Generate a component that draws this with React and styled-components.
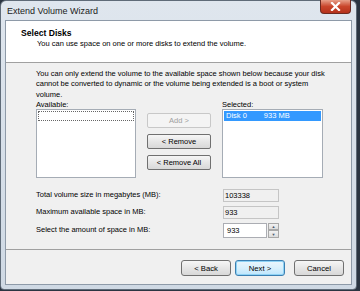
import styled, { createGlobalStyle } from 'styled-components'

const Global = createGlobalStyle`
  html, body {
    margin: 0;
    padding: 0;
    background: #2b3542;
    width: 360px;
    height: 291px;
    overflow: hidden;
  }
  * { box-sizing: border-box; }
`

const font = `"Liberation Sans", Arial, sans-serif`

function App() {
  return (
    <>
      <Global />
      <Window>
        <TitleBar>
          <Title>Extend Volume Wizard</Title>
          <CloseButton>
            <svg width="11" height="9" viewBox="0 0 11 9">
              <path d="M2 1 L9 8 M9 1 L2 8" stroke="#fff" strokeWidth="2.2" strokeLinecap="square" />
            </svg>
          </CloseButton>
        </TitleBar>
        <Client>
          <Header>
            <HeaderTitle>Select Disks</HeaderTitle>
            <HeaderSub>You can use space on one or more disks to extend the volume.</HeaderSub>
          </Header>
          <Body>
            <Intro>
              You can only extend the volume to the available space shown below because your disk
              <br />
              cannot be converted to dynamic or the volume being extended is a boot or system
              <br />
              volume.
            </Intro>
            <ListArea>
              <Column>
                <Label>Available:</Label>
                <ListBox>
                  <FocusRow />
                </ListBox>
              </Column>
              <Buttons>
                <Button disabled>Add &gt;</Button>
                <Button>&lt; Remove</Button>
                <Button>&lt; Remove All</Button>
              </Buttons>
              <Column>
                <Label>Selected:</Label>
                <ListBox>
                  <SelectedRow>
                    <span>Disk 0</span>
                    <span>933 MB</span>
                  </SelectedRow>
                </ListBox>
              </Column>
            </ListArea>
            <Fields>
              <FieldLabel>Total volume size in megabytes (MB):</FieldLabel>
              <ReadOnly>103338</ReadOnly>
              <FieldLabel>Maximum available space in MB:</FieldLabel>
              <ReadOnly>933</ReadOnly>
              <FieldLabel>Select the amount of space in MB:</FieldLabel>
              <Spinner>
                <SpinValue>933</SpinValue>
                <SpinButtons>
                  <SpinBtn>▲</SpinBtn>
                  <SpinBtn>▼</SpinBtn>
                </SpinButtons>
              </Spinner>
            </Fields>
          </Body>
          <Footer>
            <NavButton>&lt; Back</NavButton>
            <NavButton focused>Next &gt;</NavButton>
            <NavButton gap>Cancel</NavButton>
          </Footer>
        </Client>
      </Window>
    </>
  )
}

const Window = styled.div`
  width: 357px;
  height: 290px;
  background: linear-gradient(#dfe6ee, #cfd9e4);
  border: 1px solid #5f6b78;
  border-radius: 6px 6px 4px 4px;
  display: flex;
  flex-direction: column;
  padding: 0 4px 4px 4px;
  font-family: ${font};
  color: #000;
`
const TitleBar = styled.div`
  height: 19px;
  display: flex;
  align-items: flex-start;
  justify-content: space-between;
`
const Title = styled.div`
  font-size: 9px;
  padding-left: 2px;
  padding-top: 5px;
  color: #1a1a1a;
`
const CloseButton = styled.div`
  width: 31px;
  height: 14px;
  margin-right: 1px;
  margin-top: -1px;
  background: linear-gradient(#e8a08a, #c9452b 50%, #b5321c);
  border: 1px solid #6d2a20;
  border-top: none;
  border-radius: 0 0 4px 4px;
  display: flex;
  align-items: center;
  justify-content: center;
`
const Client = styled.div`
  flex: 1;
  display: flex;
  flex-direction: column;
  background: #f0f0f0;
  border: 1px solid #8e9aa8;
`
const Header = styled.div`
  height: 42px;
  background: #fff;
  border-bottom: 1px solid #a0a0a0;
  padding: 7px 0 0 15px;
`
const HeaderTitle = styled.div`
  font-size: 8.6px;
  font-weight: bold;
`
const HeaderSub = styled.div`
  font-size: 7.5px;
  padding-left: 16px;
  margin-top: 1px;
`
const Body = styled.div`
  flex: 1;
  padding: 6px 0 0 30px;
  border-bottom: 1px solid #a0a0a0;
  font-size: 7.5px;
`
const Intro = styled.div`
  white-space: nowrap;
  line-height: 10.3px;
`
const ListArea = styled.div`
  display: grid;
  grid-template-columns: 100px 64px 101px;
  column-gap: 11px;
`
const Column = styled.div`
  display: flex;
  flex-direction: column;
`
const Label = styled.div`
  height: 9px;
  line-height: 9px;
`
const ListBox = styled.div`
  height: 69px;
  background: #fff;
  border: 1px solid #a5acb5;
  padding: 1px;
`
const FocusRow = styled.div`
  height: 10px;
  border: 1px dotted #666;
`
const SelectedRow = styled.div`
  height: 10px;
  background: #3399ff;
  color: #fff;
  display: flex;
  gap: 17px;
  padding-left: 2px;
  line-height: 10px;
`
const Buttons = styled.div`
  display: flex;
  flex-direction: column;
  gap: 6px;
  padding-top: 13px;
`
const Button = styled.div`
  height: 15px;
  border: 1px solid ${p => (p.disabled ? '#c8c8c8' : '#707070')};
  border-radius: 2px;
  background: ${p => (p.disabled ? '#f4f4f4' : 'linear-gradient(#f6f6f6, #e6e6e6 50%, #d8d8d8)')};
  color: ${p => (p.disabled ? '#a0a0a0' : '#000')};
  display: flex;
  align-items: center;
  justify-content: center;
`
const Fields = styled.div`
  display: grid;
  grid-template-columns: 187px 56px;
  row-gap: 4px;
  margin-top: 11px;
  align-items: center;
`
const FieldLabel = styled.div`
  line-height: 12px;
`
const ReadOnly = styled.div`
  height: 13px;
  background: #f0f0f0;
  border: 1px solid #c5c5c5;
  line-height: 11px;
  padding-left: 1px;
`
const Spinner = styled.div`
  height: 15px;
  display: flex;
  gap: 1px;
`
const SpinValue = styled.div`
  flex: 1;
  background: #fff;
  border: 1px solid #abadb3;
  padding-left: 3px;
  line-height: 13px;
`
const SpinButtons = styled.div`
  width: 11px;
  display: flex;
  flex-direction: column;
`
const SpinBtn = styled.div`
  flex: 1;
  font-size: 4px;
  color: #4a5a70;
  background: linear-gradient(#f2f2f2, #dcdcdc);
  border: 1px solid #a8a8a8;
  display: flex;
  align-items: center;
  justify-content: center;
`
const Footer = styled.div`
  height: 34px;
  display: flex;
  justify-content: flex-end;
  align-items: center;
  padding-right: 7px;
  gap: 4px;
  padding-top: 2px;
`
const NavButton = styled.div`
  width: 50px;
  height: 16px;
  margin-left: ${p => (p.gap ? '5px' : '0')};
  border: 1px solid ${p => (p.focused ? '#3c7fb1' : '#707070')};
  border-radius: 3px;
  background: ${p =>
    p.focused
      ? 'linear-gradient(#eaf6fd, #d9f0fc 50%, #bee6fd)'
      : 'linear-gradient(#f6f6f6, #e6e6e6 50%, #d8d8d8)'};
  box-shadow: ${p => (p.focused ? 'inset 0 0 0 1px #8fd3f5' : 'none')};
  font-size: 7.7px;
  display: flex;
  align-items: center;
  justify-content: center;
`

export default App
